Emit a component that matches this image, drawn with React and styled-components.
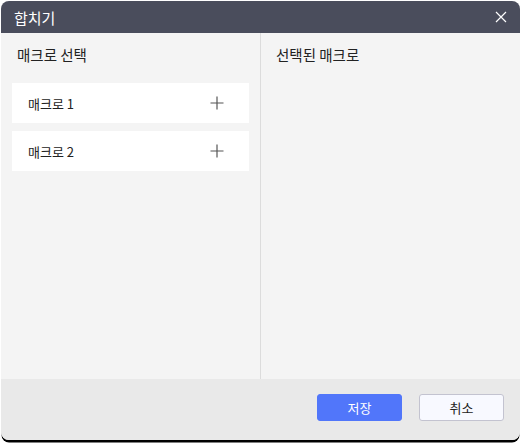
import React from 'react';
import styled, { createGlobalStyle } from 'styled-components';

const GlobalStyle = createGlobalStyle`
  html, body {
    margin: 0;
    padding: 0;
    background: #ffffff;
  }
  body {
    font-family: "Noto Sans CJK KR", "Noto Sans", sans-serif;
  }
`;

const Page = styled.div`
  width: 521px;
  height: 444px;
  padding: 1px 1px 0 1px;
  box-sizing: border-box;
`;

const Dialog = styled.section`
  width: 519px;
  height: 439px;
  display: flex;
  flex-direction: column;
  border-radius: 8px;
  overflow: hidden;
  background: #f4f4f4;
  box-shadow: 0 3px 0 -0.5px #000;
`;

const Header = styled.header`
  height: 32px;
  flex: none;
  display: flex;
  align-items: center;
  justify-content: space-between;
  padding: 0 12px 0 13px;
  background: #4a4d5c;
  color: #fff;
  font-size: 15px;
`;

const CloseButton = styled.button`
  border: none;
  background: none;
  padding: 0;
  width: 14px;
  height: 14px;
  display: flex;
  align-items: center;
  justify-content: center;
  cursor: pointer;
`;

const Body = styled.div`
  flex: 1;
  display: grid;
  grid-template-columns: 260px 1fr;
`;

const Panel = styled.div`
  padding: 12px 11px;
  display: flex;
  flex-direction: column;
  border-right: ${(p) => (p.divided ? '1px solid #dcdcdc' : 'none')};
  padding-left: ${(p) => (p.divided ? '11px' : '10px')};
`;

const PanelTitle = styled.h3`
  margin: 0 0 18px 5px;
  font-size: 14.5px;
  font-weight: 400;
  color: #222;
  line-height: 20px;
`;

const List = styled.div`
  display: flex;
  flex-direction: column;
  gap: 8px;
`;

const Item = styled.div`
  height: 40px;
  background: #fff;
  display: flex;
  align-items: center;
  justify-content: space-between;
  padding: 0 25px 0 16px;
  font-size: 13px;
  color: #222;
`;

const AddButton = styled.button`
  border: none;
  background: none;
  padding: 0;
  width: 14px;
  height: 14px;
  display: flex;
  cursor: pointer;
`;

const Footer = styled.footer`
  height: 61px;
  flex: none;
  background: #e9e9e9;
  display: flex;
  align-items: center;
  justify-content: flex-end;
  gap: 17px;
  padding: 0 16px 4px 0;
  box-sizing: border-box;
`;

const Button = styled.button`
  width: 85px;
  height: 27px;
  border-radius: 3px;
  font-family: inherit;
  font-size: 13px;
  cursor: pointer;
  border: 1px solid ${(p) => (p.primary ? '#5176fa' : '#c3c3d0')};
  background: ${(p) => (p.primary ? '#5176fa' : '#f8f9ff')};
  color: ${(p) => (p.primary ? '#fff' : '#222')};
`;

const PlusIcon = () => (
  <svg width="14" height="14" viewBox="0 0 14 14">
    <path d="M7 0.5v13M0.5 7h13" stroke="#555" strokeWidth="1.2" fill="none" />
  </svg>
);

const CloseIcon = () => (
  <svg width="12" height="12" viewBox="0 0 12 12">
    <path d="M1 1l10 10M11 1L1 11" stroke="#fff" strokeWidth="1.2" fill="none" />
  </svg>
);

const macros = ['매크로 1', '매크로 2'];

const App = () => (
  <Page>
    <GlobalStyle />
    <Dialog>
      <Header>
        <span>합치기</span>
        <CloseButton aria-label="닫기">
          <CloseIcon />
        </CloseButton>
      </Header>
      <Body>
        <Panel divided>
          <PanelTitle>매크로 선택</PanelTitle>
          <List>
            {macros.map((m) => (
              <Item key={m}>
                <span>{m}</span>
                <AddButton aria-label="추가">
                  <PlusIcon />
                </AddButton>
              </Item>
            ))}
          </List>
        </Panel>
        <Panel>
          <PanelTitle>선택된 매크로</PanelTitle>
        </Panel>
      </Body>
      <Footer>
        <Button primary>저장</Button>
        <Button>취소</Button>
      </Footer>
    </Dialog>
  </Page>
);

export default App;
